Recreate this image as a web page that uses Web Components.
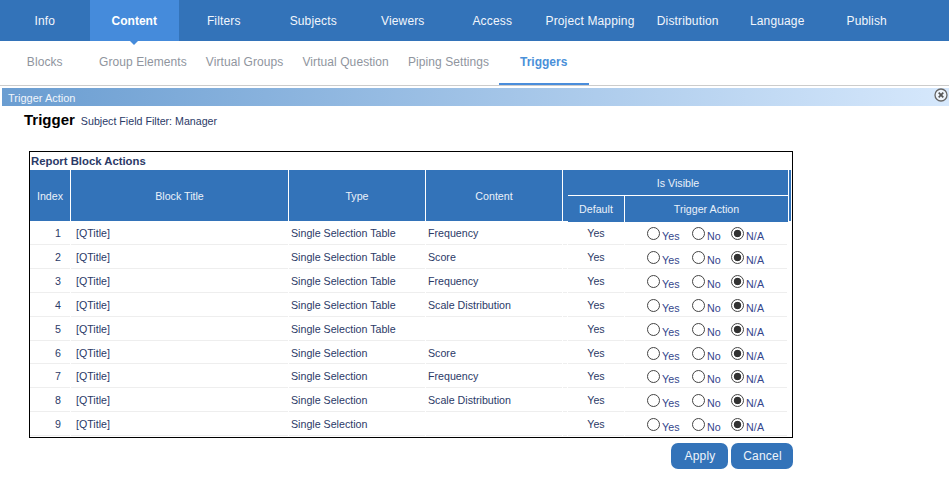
<!DOCTYPE html>
<html>
<head>
<meta charset="utf-8">
<title>Trigger Action</title>
<style>
  body { margin: 0; background: #fff; font-family: "Liberation Sans", Arial, sans-serif; }
</style>
</head>
<body>
<top-nav>
  <nav-item>Info</nav-item>
  <nav-item active>Content</nav-item>
  <nav-item>Filters</nav-item>
  <nav-item>Subjects</nav-item>
  <nav-item>Viewers</nav-item>
  <nav-item>Access</nav-item>
  <nav-item>Project Mapping</nav-item>
  <nav-item>Distribution</nav-item>
  <nav-item>Language</nav-item>
  <nav-item>Publish</nav-item>
</top-nav>
<sub-nav>
  <sub-item>Blocks</sub-item>
  <sub-item>Group Elements</sub-item>
  <sub-item>Virtual Groups</sub-item>
  <sub-item>Virtual Question</sub-item>
  <sub-item>Piping Settings</sub-item>
  <sub-item active>Triggers</sub-item>
</sub-nav>
<title-bar>Trigger Action</title-bar>
<trigger-head filter="Subject Field Filter: Manager">Trigger</trigger-head>
<block-table caption="Report Block Actions">
  <block-row index="1" type="Single Selection Table" content="Frequency"></block-row>
  <block-row index="2" type="Single Selection Table" content="Score"></block-row>
  <block-row index="3" type="Single Selection Table" content="Frequency"></block-row>
  <block-row index="4" type="Single Selection Table" content="Scale Distribution"></block-row>
  <block-row index="5" type="Single Selection Table" content=""></block-row>
  <block-row index="6" type="Single Selection" content="Score"></block-row>
  <block-row index="7" type="Single Selection" content="Frequency"></block-row>
  <block-row index="8" type="Single Selection" content="Scale Distribution"></block-row>
  <block-row index="9" type="Single Selection" content=""></block-row>
</block-table>
<form-actions>
  <action-button>Apply</action-button>
  <action-button>Cancel</action-button>
</form-actions>

<script>
// columnas compartidas entre cabecera y filas de la tabla
const TABLE_COLS = '40px 217px 136px 136px 4px 56px 163px 2px';

class TopNav extends HTMLElement {
  constructor() {
    super();
    this.attachShadow({ mode: 'open' });
    this.shadowRoot.innerHTML = `
      <style>
        :host { display: flex; height: 41px; background: #3373b9; }
      </style>
      <slot></slot>`;
  }
}

class NavItem extends HTMLElement {
  constructor() {
    super();
    this.attachShadow({ mode: 'open' });
    this.shadowRoot.innerHTML = `
      <style>
        :host {
          display: flex; align-items: center; justify-content: center; box-sizing: border-box;
          position: relative; min-width: 89.5px; padding: 0 8.5px; height: 41px; white-space: nowrap;
          font-size: 12px; letter-spacing: 0.15px; color: #f2f6fc;
        }
        :host([active]) { background: #458bdb; font-weight: bold; letter-spacing: 0; color: #fff; }
        .caret { display: none; }
        :host([active]) .caret {
          display: block; position: absolute; left: 50%; top: 41px; margin-left: -4px;
          border: 4px solid transparent; border-bottom: 0; border-top: 4px solid #458bdb;
        }
      </style>
      <slot></slot><span class="caret"></span>`;
  }
}

class SubNav extends HTMLElement {
  constructor() {
    super();
    this.attachShadow({ mode: 'open' });
    this.shadowRoot.innerHTML = `
      <style>
        :host { display: flex; height: 44px; border-bottom: 1px solid #ccc; }
      </style>
      <slot></slot>`;
  }
}

class SubItem extends HTMLElement {
  constructor() {
    super();
    this.attachShadow({ mode: 'open' });
    this.shadowRoot.innerHTML = `
      <style>
        :host {
          display: flex; align-items: center; justify-content: center; box-sizing: border-box;
          min-width: 89.5px; padding: 0 9.5px 3px; height: 44px; white-space: nowrap;
          font-size: 12px; letter-spacing: 0.08px; color: #8f959e;
        }
        :host([active]) {
          min-width: 90px; padding-bottom: 1px; font-weight: bold; letter-spacing: 0; color: #4a90d9;
          border-bottom: 2px solid #4a8ddb;
        }
      </style>
      <slot></slot>`;
  }
}

class TitleBar extends HTMLElement {
  constructor() {
    super();
    this.attachShadow({ mode: 'open' });
    this.shadowRoot.innerHTML = `
      <style>
        :host {
          display: flex; justify-content: space-between; align-items: flex-start;
          height: 18px; margin: 2px 0 0 2px; padding-left: 6px;
          background: linear-gradient(to right, #6a9dd1, #d6e8fc);
          font-size: 11px; line-height: 20px; color: #f0f5fb;
        }
        svg { display: block; margin-right: 1px; }
      </style>
      <span><slot></slot></span>
      <svg width="14" height="14" viewBox="0 0 14 14">
        <circle cx="7" cy="7" r="6" fill="#eef4fb" stroke="#666" stroke-width="1.3"/>
        <path d="M4.7 4.7l4.6 4.6M9.3 4.7l-4.6 4.6" stroke="#555" stroke-width="1.7" fill="none"/>
      </svg>`;
  }
}

class TriggerHead extends HTMLElement {
  constructor() {
    super();
    this.attachShadow({ mode: 'open' });
    this.shadowRoot.innerHTML = `
      <style>
        :host { display: flex; align-items: baseline; gap: 6px; height: 45px; padding: 5px 0 0 24px; box-sizing: border-box; }
        b { font-size: 15px; color: #000; }
        span { font-size: 10.67px; color: #2b3a67; }
      </style>
      <b><slot></slot></b><span class="filter"></span>`;
  }

  connectedCallback() {
    this.shadowRoot.querySelector('.filter').textContent = this.getAttribute('filter');
  }
}

class BlockTable extends HTMLElement {
  constructor() {
    super();
    this.attachShadow({ mode: 'open' });
    this.shadowRoot.innerHTML = `
      <style>
        :host {
          display: block; box-sizing: border-box; width: 764px; height: 287px; margin-left: 29px;
          border: 1px solid #000; font-size: 10.67px;
        }
        .caption { height: 18px; line-height: 19px; padding-left: 1px; font-size: 11.33px; font-weight: bold; color: #2b3a67; }
        .head {
          display: grid; grid-template-columns: ${TABLE_COLS}; column-gap: 1px; height: 51.2px;
          color: #eaf1fa; text-align: center;
        }
        .head > div { background: #3373b9; display: flex; align-items: center; justify-content: center; }
        .head .visible { grid-column: span 3; display: block; padding-left: 5px; }
        .visible .top { height: 25px; line-height: 26px; }
        .visible .bottom { display: grid; grid-template-columns: 56px 163px; column-gap: 1px; border-top: 1px solid #fff; height: 25.2px; line-height: 26px; background: #fff; }
        .bottom span { background: #3373b9; }
      </style>
      <div class="caption"></div>
      <div class="head">
        <div>Index</div>
        <div>Block Title</div>
        <div>Type</div>
        <div>Content</div>
        <div class="visible">
          <div class="top">Is Visible</div>
          <div class="bottom"><span>Default</span><span>Trigger Action</span></div>
        </div>
        <div></div>
      </div>
      <slot></slot>`;
  }

  connectedCallback() {
    this.shadowRoot.querySelector('.caption').textContent = this.getAttribute('caption');
  }
}

class BlockRow extends HTMLElement {
  constructor() {
    super();
    this.attachShadow({ mode: 'open' });
    this.shadowRoot.innerHTML = `
      <style>
        :host {
          display: grid; grid-template-columns: ${TABLE_COLS}; column-gap: 1px; height: 23.875px;
          font-size: 10.67px; color: #2b3a67;
        }
        div { border-bottom: 1px solid #eee; line-height: 25px; height: 22.875px; white-space: nowrap; overflow: hidden; }
        .index { text-align: right; padding-right: 9px; }
        .title { padding-left: 5px; }
        .type, .content { padding-left: 2px; }
        .default { text-align: center; line-height: 24px; }
        .choice { margin-right: 1px; }
        .edge { border: 0; }
      </style>
      <div class="index"></div>
      <div class="title">[QTitle]</div>
      <div class="type"></div>
      <div class="content"></div>
      <div></div>
      <div class="default">Yes</div>
      <div class="choice"><radio-choice></radio-choice></div>
      <div class="edge"></div>`;
  }

  connectedCallback() {
    const root = this.shadowRoot;
    root.querySelector('.index').textContent = this.getAttribute('index');
    root.querySelector('.type').textContent = this.getAttribute('type');
    root.querySelector('.content').textContent = this.getAttribute('content');
    root.querySelector('radio-choice').setAttribute('name', 'row' + this.getAttribute('index'));
  }
}

class RadioChoice extends HTMLElement {
  constructor() {
    super();
    this.attachShadow({ mode: 'open' });
    this.shadowRoot.innerHTML = `
      <style>
        :host { display: flex; height: 22px; padding: 6px 0 0 22px; box-sizing: border-box; }
        label { display: flex; align-items: flex-start; line-height: 19px; font-size: 10.67px; letter-spacing: 0.15px; color: #34468c; }
        label:nth-of-type(1) { width: 45px; }
        label:nth-of-type(2) { width: 39px; }
        input {
          appearance: none; -webkit-appearance: none; box-sizing: border-box; flex: none;
          width: 13px; height: 13px; margin: 0 2px 0 0; border: 1px solid #444; border-radius: 50%; background: #fff;
        }
        input:checked { background: radial-gradient(circle, #333 0 3.4px, #fff 4.1px); }
      </style>
      <label><input type="radio" value="yes">Yes</label>
      <label><input type="radio" value="no">No</label>
      <label><input type="radio" value="na" checked>N/A</label>`;
  }

  connectedCallback() {
    this.shadowRoot.querySelectorAll('input').forEach(i => { i.name = this.getAttribute('name'); });
  }
}

class FormActions extends HTMLElement {
  constructor() {
    super();
    this.attachShadow({ mode: 'open' });
    this.shadowRoot.innerHTML = `
      <style>
        :host { display: flex; justify-content: flex-end; gap: 3px; width: 793px; margin-top: 5px; }
      </style>
      <slot></slot>`;
  }
}

class ActionButton extends HTMLElement {
  constructor() {
    super();
    this.attachShadow({ mode: 'open' });
    this.shadowRoot.innerHTML = `
      <style>
        :host {
          display: block; box-sizing: border-box; height: 26px; line-height: 26px; padding: 0 11px 0 12px;
          border-radius: 7px; background: #3373b9; color: #eef4fb; font-size: 12px; letter-spacing: 0.2px; text-align: center;
        }
        :host(:first-child) { min-width: 57px; }
        :host(:last-child) { min-width: 62px; }
      </style>
      <slot></slot>`;
  }
}

customElements.define('top-nav', TopNav);
customElements.define('nav-item', NavItem);
customElements.define('sub-nav', SubNav);
customElements.define('sub-item', SubItem);
customElements.define('title-bar', TitleBar);
customElements.define('trigger-head', TriggerHead);
customElements.define('block-table', BlockTable);
customElements.define('block-row', BlockRow);
customElements.define('radio-choice', RadioChoice);
customElements.define('form-actions', FormActions);
customElements.define('action-button', ActionButton);
</script>
</body>
</html>
